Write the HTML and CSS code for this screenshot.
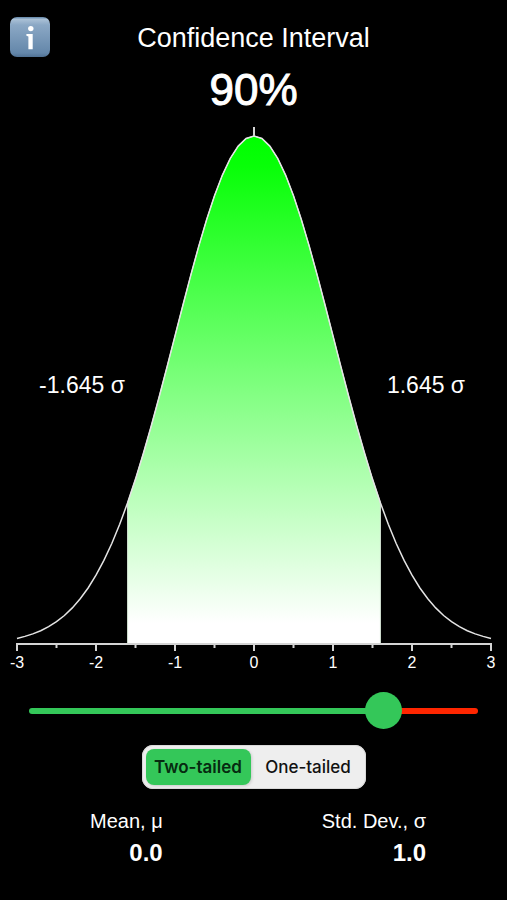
FILE: index.html
```html
<!DOCTYPE html>
<html lang="en">
<head>
    <meta charset="UTF-8">
    <meta name="viewport" content="width=device-width, initial-scale=1">
    <title>Confidence Interval</title>
    <link rel="stylesheet" href="styles.css">
</head>
<body>
    <main class="app">
        <header class="header">
            <button class="info" type="button" aria-label="Information">
                <svg viewBox="0 0 42 42" aria-hidden="true">
                    <defs>
                        <linearGradient id="infoFill" x1="0" y1="0" x2="0" y2="1">
                            <stop offset="0" stop-color="#5f83a6"/>
                            <stop offset="0.06" stop-color="#a9c0d6"/>
                            <stop offset="0.2" stop-color="#8ba8c5"/>
                            <stop offset="0.9" stop-color="#6487aa"/>
                            <stop offset="1" stop-color="#4f7193"/>
                        </linearGradient>
                    </defs>
                    <rect x="1" y="1" width="40" height="40" rx="7" fill="url(#infoFill)"/>
                    <circle cx="21.8" cy="12.6" r="2.7" fill="#fff"/>
                    <path d="M17.4 18h6.3v15.2h-4.3V20.6l-2-.8z" fill="#fff"/>
                </svg>
            </button>
            <h1>Confidence Interval</h1>
            <output id="level" class="level" for="confidence">90%</output>
        </header>

        <svg class="chart" viewBox="0 0 507 562" role="img" aria-label="Normal distribution">
            <defs>
                <linearGradient id="areaFill" gradientUnits="userSpaceOnUse" x1="0" y1="16" x2="0" y2="524">
                    <stop offset="0" stop-color="#00ff00"/>
                    <stop offset="0.06" stop-color="#08ff08"/>
                    <stop offset="0.96" stop-color="#fff"/>
                </linearGradient>
            </defs>
            <path id="area" class="area" fill="url(#areaFill)"/>
            <path id="curve" class="line"/>
            <path id="axis" class="axis"/>
            <g id="ticks" class="ticks"></g>
            <text id="lower" class="bound" x="82" y="273">-1.645 σ</text>
            <text id="upper" class="bound" x="426" y="273">1.645 σ</text>
        </svg>

        <input type="range" id="confidence" class="slider" min="50" max="99" value="90" aria-label="Confidence level">

        <fieldset class="tails">
            <input type="radio" name="tails" id="two" value="2" checked>
            <label for="two">Two-tailed</label>
            <input type="radio" name="tails" id="one" value="1">
            <label for="one">One-tailed</label>
        </fieldset>

        <dl class="stats">
            <div>
                <dt>Mean, μ</dt>
                <dd>0.0</dd>
            </div>
            <div>
                <dt>Std. Dev., σ</dt>
                <dd>1.0</dd>
            </div>
        </dl>
    </main>

    <script src="script.js"></script>
</body>
</html>
```
FILE: styles.css
```css
* {
    box-sizing: border-box;
}
body {
    margin: 0;
    background: #000;
    color: #fff;
    font-family: "Helvetica Neue", "Liberation Sans", Arial, sans-serif;
}
.app {
    display: flex;
    flex-direction: column;
    align-items: center;
}
.header {
    display: grid;
    grid-template-columns: 42px 1fr 42px;
    width: 100%;
    padding: 16px 9px 0;
    text-align: center;
}
.info {
    height: 42px;
    padding: 0;
    border: none;
    background: none;
    cursor: pointer;
}
.info svg {
    display: block;
}
h1 {
    margin: 0;
    font-size: 27px;
    font-weight: normal;
    line-height: 44px;
}
.level {
    grid-column: 2;
    font-size: 44px;
    line-height: 60px;
    -webkit-text-stroke: 1px #fff;
}

.chart {
    display: block;
    width: 100%;
}
.line {
    fill: none;
    stroke: #e4e4e4;
    stroke-width: 1.5;
}
.axis {
    fill: none;
    stroke: #d4d4d4;
    stroke-width: 2;
}
.area {
    stroke: #d8e8d8;
    stroke-width: 1;
}
.ticks {
    fill: #fff;
    font-size: 16px;
    text-anchor: middle;
}
.bound {
    fill: #fff;
    font-size: 23px;
    text-anchor: middle;
}

.slider {
    -webkit-appearance: none;
    appearance: none;
    width: calc(100% - 58px);
    height: 38px;
    margin: 10px 0 0;
    background: none;
}
.slider::-webkit-slider-runnable-track {
    height: 6px;
    border-radius: 3px;
    background: linear-gradient(to right, #34c759 var(--fill), #ff2600 var(--fill));
}
.slider::-webkit-slider-thumb {
    -webkit-appearance: none;
    width: 37px;
    height: 37px;
    margin-top: -16px;
    border-radius: 50%;
    background: #34c759;
}

.tails {
    display: grid;
    grid-template-columns: 105px 1fr;
    gap: 4px;
    width: 224px;
    margin: 15px 0 0;
    padding: 3px;
    border: 1px solid #d8d8d8;
    border-radius: 11px;
    background: #eee;
    color: #111;
    font: 500 17px/36px Inter, sans-serif;
    text-align: center;
}
.tails input {
    position: absolute;
    opacity: 0;
}
.tails label {
    border-radius: 8px;
    cursor: pointer;
}
.tails input:checked + label {
    background: #34c759;
    color: #062b10;
    font-weight: 600;
    box-shadow: 1px 1px 3px rgba(0, 0, 0, 0.15);
}

.stats {
    display: flex;
    justify-content: space-between;
    width: 100%;
    margin: 16px 0 0;
    padding: 0 81px 0 90px;
    font-size: 20px;
    line-height: 32px;
    text-align: right;
}
.stats dd {
    margin: 0;
    font-size: 24px;
    font-weight: bold;
}
```
FILE: script.js
```js
const CENTER = 254;
const UNIT = 79;
const BASE = 524;
const PEAK = 508;

const slider = document.getElementById('confidence');

function point(s) {
    const x = CENTER + s * UNIT;
    const y = BASE - PEAK * Math.exp(-s * s / 2);
    return x.toFixed(1) + ' ' + y.toFixed(1);
}

function points(from, to) {
    const list = [];
    for (let i = Math.round(from * 10); i <= Math.round(to * 10); i++) {
        list.push(point(i / 10));
    }
    return list.join('L');
}

// cumulative normal, integrated from 0 until it reaches p
function zFor(p) {
    const step = 0.0001;
    let z = 0;
    let sum = 0.5;
    while (sum < p) {
        const mid = z + step / 2;
        sum += Math.exp(-mid * mid / 2) / Math.sqrt(2 * Math.PI) * step;
        z += step;
    }
    return z;
}

function drawAxis() {
    let d = `M${CENTER - 3 * UNIT - 1} ${BASE}H${CENTER + 3 * UNIT + 1}`;
    let labels = '';
    for (let s = -3; s <= 3; s += 0.5) {
        const x = CENTER + s * UNIT;
        const whole = Number.isInteger(s);
        d += `M${x} ${BASE}v${whole ? 7 : 4}`;
        if (whole) labels += `<text x="${x}" y="548">${s}</text>`;
    }
    d += `M${CENTER} 7v9`;
    document.getElementById('axis').setAttribute('d', d);
    document.getElementById('ticks').innerHTML = labels;
    document.getElementById('curve').setAttribute('d', 'M' + points(-3, 3));
}

function update() {
    const level = Number(slider.value);
    const two = document.getElementById('two').checked;
    const z = zFor(two ? 0.5 + level / 200 : level / 100);
    const edge = Math.floor(z * 10) / 10;
    const left = two ? -edge : -3;

    document.getElementById('area').setAttribute('d',
        `M${CENTER + left * UNIT} ${BASE}L${points(left, edge)}L${CENTER + edge * UNIT} ${BASE}Z`);
    document.getElementById('level').textContent = level + '%';
    document.getElementById('lower').textContent = two ? `-${z.toFixed(3)} σ` : '';
    document.getElementById('upper').textContent = `${z.toFixed(3)} σ`;
    slider.style.setProperty('--fill', (level - 50) / 49 * 100 + '%');
}

slider.addEventListener('input', update);
document.querySelectorAll('[name="tails"]').forEach(r => r.addEventListener('change', update));

drawAxis();
update();
```
